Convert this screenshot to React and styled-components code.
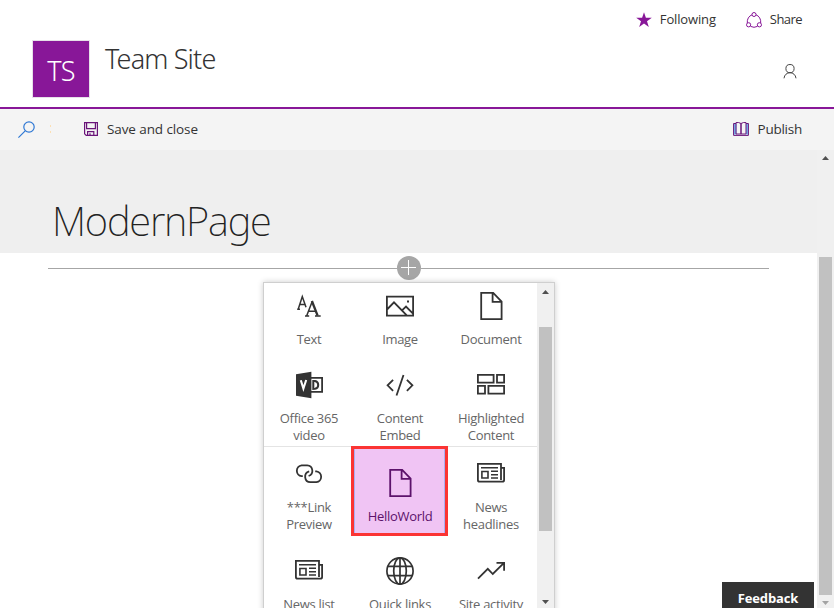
import React from 'react';
import styled, { createGlobalStyle, css } from 'styled-components';

const Global = createGlobalStyle`
  * { box-sizing: border-box; }
  body {
    margin: 0;
    overflow: hidden;
    background: #fff;
    color: #333;
    font-family: 'Open Sans', 'Noto Sans', sans-serif;
  }
  svg { display: block; flex: none; }
`;

const Page = styled.div`
  display: flex;
  flex-direction: column;
  width: 834px;
  height: 608px;
  overflow: hidden;
`;

const SiteHeader = styled.header`
  display: flex;
  justify-content: space-between;
  height: 109px;
  padding-left: 32px;
  border-bottom: 2px solid #881798;
`;

const SiteIdentity = styled.div`
  display: flex;
  gap: 15px;
  padding-top: 40px;
`;

const SiteLogo = styled.div`
  width: 58px;
  height: 58px;
  border: 1px solid #e6e0e8;
  background: #881798;
  color: #fff;
  text-align: center;
  font: 300 27px/60px 'Noto Sans', sans-serif;
  letter-spacing: -0.8px;
`;

const SiteTitle = styled.h1`
  margin: 0;
  font: 300 27px/38px 'Noto Sans', sans-serif;
  letter-spacing: -0.85px;
`;

const HeaderSide = styled.div`
  display: flex;
  flex-direction: column;
  align-items: flex-end;
  gap: 36px;
  padding: 11px 32px 0 0;
`;

const HeaderActions = styled.nav`
  display: flex;
  gap: 30px;
`;

const HeaderAction = styled.div`
  display: flex;
  align-items: center;
  gap: 8px;
  height: 17px;
  font-size: 13px;
  line-height: 17px;
  letter-spacing: ${(p) => p.$tracking}px;
`;

const Account = styled.div`
  padding-right: 5px;
`;

const Toolbar = styled.div`
  display: flex;
  align-items: center;
  height: 41px;
  padding: 0 32px 1px 18px;
  background: #f4f4f4;
`;

const ToolbarHandle = styled.div`
  display: flex;
  flex-direction: column;
  gap: 4px;
  width: 33px;
  margin-left: 15px;
  &::before, &::after {
    content: '';
    width: 1px;
    height: 2px;
    background: #fbdfb4;
  }
`;

const Command = styled.div`
  display: flex;
  align-items: center;
  gap: 8px;
  font-size: 13.5px;
  line-height: 18px;
  letter-spacing: ${(p) => p.$tracking}px;
  ${(p) => p.$end && css`margin-left: auto;`}
`;

const Body = styled.div`
  display: flex;
  flex: 1;
  min-height: 0;
`;

const Canvas = styled.main`
  position: relative;
  flex: 1;
`;

const TitleBand = styled.div`
  height: 103px;
  padding: 41px 0 0 52px;
  background: #efefef;
`;

const PageTitle = styled.h2`
  margin: 0;
  font: 240 40px/60px 'Noto Sans', sans-serif;
  letter-spacing: -1.2px;
  color: #222;
`;

const Divider = styled.div`
  display: flex;
  align-items: center;
  height: 24px;
  margin: 3px 48px 0;
  &::before, &::after {
    content: '';
    flex: 1;
    height: 1px;
    margin-top: 1px;
    background: #a6a6a6;
  }
`;

const Picker = styled.div`
  position: absolute;
  top: 132px;
  left: 263px;
  display: flex;
  width: 292px;
  height: 360px;
  border: 1px solid #cfcfcf;
  background: #fff;
  box-shadow: 0 0 6px rgba(0, 0, 0, 0.2);
`;

const PickerList = styled.div`
  width: 273px;
`;

const PartGroup = styled.div`
  display: grid;
  grid-template-columns: repeat(3, 91px);
  grid-template-rows: ${(p) => p.$rows};
  ${(p) => p.$separated && css`
    border-top: 1px solid #e4e4e4;
    > * { padding-top: 4px; }
  `}
`;

const Part = styled.div`
  color: #333;
  ${(p) => p.$selected && css`
    && {
      z-index: 1;
      width: 97px;
      height: 90px;
      margin: -1px 0 0 -4px;
      padding-top: 11px;
      border: 3px solid #fb3434;
      background: #f0c4f4;
      box-shadow: inset 1px 0 #a9b0f3, inset -1px 0 #a9b0f3;
      color: #5c126b;
    }
  `}
`;

const PartIcon = styled.div`
  display: flex;
  align-items: center;
  height: 46px;
  padding-left: ${(p) => (p.$selected ? 32 : 31)}px;
`;

const PartLabel = styled.div`
  padding: ${(p) => (p.$selected ? '2px 0 0 1px' : '2px 1px 0 0')};
  text-align: center;
  white-space: pre-line;
  font-size: 13px;
  line-height: 17px;
  letter-spacing: -0.3px;
  color: ${(p) => (p.$selected ? '#5c126b' : '#666')};
`;

const ScrollTrack = styled.div`
  display: flex;
  flex-direction: column;
  align-items: center;
  flex: none;
  width: 17px;
  background: #f0f0f0;
  padding: ${(p) => p.$pad};
`;

const ScrollThumb = styled.div`
  width: 13px;
  height: ${(p) => p.$length}px;
  margin: ${(p) => p.$before}px 0 ${(p) => p.$after}px;
  background: #c1c1c1;
`;

const Feedback = styled.div`
  position: absolute;
  right: 3px;
  bottom: 0;
  width: 92px;
  height: 26px;
  background: #333;
  color: #fff;
  text-align: center;
  font-size: 13px;
  font-weight: 700;
  line-height: 32px;
  letter-spacing: -0.15px;
`;

const Arrow = ({ down, color = '#505050' }) => (
  <svg width="7" height="4" viewBox="0 0 7 4" fill={color}>
    <path d={down ? 'M0 0H7L3.5 4Z' : 'M0 4H7L3.5 0Z'} />
  </svg>
);

const Glyph = ({ children, width = 1.8 }) => (
  <svg width="28" height="28" viewBox="0 0 28 28" fill="none" stroke="currentColor" strokeWidth={width}>
    {children}
  </svg>
);

const TextGlyph = () => (
  <Glyph width={1.5}>
    <path d="M3.2 17.3 7.3 4.6 11 15.2M4.9 12.6H10.2M2.2 17.3H5" />
    <path d="M11.8 23.6 17.2 9.4M13.3 19.2H21M10 23.9H14.2M20 23.9H25.7" />
    <path d="M16.9 9 22.6 23.6" strokeWidth="2.3" />
  </Glyph>
);
const ImageGlyph = () => (
  <Glyph>
    <path d="M.9 4.6H27.1V23.6H.9ZM1 17.5 8 10.3 21 23.6M16 18.3 20 14.5 27 21.6" />
    <path d="M21 9.5h2" />
  </Glyph>
);
const DocumentGlyph = () => (
  <Glyph>
    <path d="M4.2 .9H16.2L24.6 9.5V27.1H4.2ZM15.6 1V9.8H24.4" />
  </Glyph>
);
const VideoGlyph = () => (
  <Glyph>
    <path d="M15 6.9H27.1V20.9H15" />
    <path d="M18.3 10V18L20 17.8C24.3 17 24.3 11 20 10.1Z" strokeWidth="2" />
    <path d="M1 3.2 16.4 .8V27.2L1 24.8Z" fill="currentColor" stroke="none" />
    <path d="M5.8 9.2 8.4 17.6 11.2 9" stroke="#fff" strokeWidth="2.1" />
  </Glyph>
);
const EmbedGlyph = () => (
  <Glyph>
    <path d="M7.1 8.8 1.6 14.3 7.1 19.8M20.9 8.8 26.4 14.3 20.9 19.8M17.5 4 10.5 24.5" />
  </Glyph>
);
const HighlightGlyph = () => (
  <Glyph>
    <path d="M.9 3.9H16.6V11.6H.9ZM20 3.9H27.1V11.6H20ZM.9 14.9H8V22.6H.9ZM11.4 14.9H27.1V22.6H11.4Z" />
  </Glyph>
);
const LinkGlyph = () => (
  <Glyph>
    <path d="M7.8 16.2H6.6A5.5 5.5 0 0 1 6.6 5.3H12.2A5.5 5.5 0 0 1 13.6 16" />
    <path d="M20.2 11.3H21.4A5.5 5.5 0 0 1 21.4 22.2H15.4A5.5 5.5 0 0 1 14.2 11.4" />
  </Glyph>
);
const NewsGlyph = () => (
  <Glyph>
    <path d="M24 20V3.9H.9V20Q.9 21.7 2.6 21.7H25.3Q27.1 21.7 27.1 20V7.9H24" />
    <path d="M4.9 11.5H11V18H4.9ZM4 7.7H21M14 11.3H21M14 14.7H21M14 18H21" strokeWidth="1.6" />
  </Glyph>
);
const GlobeGlyph = () => (
  <Glyph width={1.7}>
    <circle cx="14" cy="14" r="13.1" />
    <ellipse cx="14" cy="14" rx="6.3" ry="13.1" />
    <path d="M14 1V27M2 9.3H26M2 18.7H26" />
  </Glyph>
);
const ActivityGlyph = () => (
  <Glyph>
    <path d="M1 21.6 10.8 11.8 15.8 17 27 5.8M19.5 5.8H27.1V13.8" />
  </Glyph>
);

const BASIC_PARTS = [
  ['Text', TextGlyph],
  ['Image', ImageGlyph],
  ['Document', DocumentGlyph],
  ['Office 365\nvideo', VideoGlyph],
  ['Content\nEmbed', EmbedGlyph],
  ['Highlighted\nContent', HighlightGlyph],
];
const MORE_PARTS = [
  ['***Link\nPreview', LinkGlyph],
  ['HelloWorld', DocumentGlyph, true],
  ['News\nheadlines', NewsGlyph],
  ['News list', NewsGlyph],
  ['Quick links', GlobeGlyph],
  ['Site activity', ActivityGlyph],
];

const renderPart = ([label, Icon, selected]) => (
  <Part key={label} $selected={selected}>
    <PartIcon $selected={selected}><Icon /></PartIcon>
    <PartLabel $selected={selected}>{label}</PartLabel>
  </Part>
);

export default function App() {
  return (
    <Page>
      <Global />
      <SiteHeader>
        <SiteIdentity>
          <SiteLogo>TS</SiteLogo>
          <SiteTitle>Team Site</SiteTitle>
        </SiteIdentity>
        <HeaderSide>
          <HeaderActions>
            <HeaderAction $tracking={-0.15}>
              <svg width="16" height="16" viewBox="0 0 16 16" fill="#881798">
                <path d="M8 .2 9.9 5.8H15.8L11 9.3 12.8 15.1 8 11.6 3.2 15.1 5 9.3.2 5.8H6.1Z" />
              </svg>
              Following
            </HeaderAction>
            <HeaderAction $tracking={-0.55}>
              <svg width="16" height="16" viewBox="0 0 16 16" fill="none" stroke="#881798">
                <circle cx="8" cy="2.5" r="2" />
                <circle cx="2.6" cy="12.8" r="2.1" />
                <circle cx="13.4" cy="12.8" r="2.1" />
                <path d="M6 2.8C2.8 4 .9 7.2 1.3 11M10 2.8C13.2 4 15.1 7.2 14.7 11M4.6 14.4Q8 16.2 11.4 14.4" />
              </svg>
              Share
            </HeaderAction>
          </HeaderActions>
          <Account>
            <svg width="14" height="15" viewBox="0 0 14 15" fill="none" stroke="#444">
              <circle cx="7" cy="4.6" r="4.1" />
              <path d="M1 14.3C1.3 10.8 4 8.7 7 8.7S12.7 10.8 13 14.3" />
            </svg>
          </Account>
        </HeaderSide>
      </SiteHeader>

      <Toolbar>
        <svg width="17" height="17" viewBox="0 0 17 17" fill="none" stroke="#2f78d4" strokeWidth="1.2">
          <circle cx="11" cy="6" r="5.2" />
          <path d="M7.2 9.8.4 16.6" />
        </svg>
        <ToolbarHandle />
        <Command $tracking={-0.1}>
          <svg width="16" height="14" viewBox="0 0 16 14" fill="none" stroke="#6a1479" strokeWidth="1.2">
            <path d="M1.6.6H14.4V13.4H3.2L1.6 11.8ZM3.6.6V6.6H12.4V.6M4.6 13.4V9.6H10.8V13.4M7 11.3V13.4" />
          </svg>
          Save and close
        </Command>
        <Command $end $tracking={-0.25}>
          <svg width="17" height="14" viewBox="0 0 17 14" fill="none">
            <path d="M.5 1.5H3.5V12.5H.5ZM13 1.5h2.5v11H13Z" fill="#79b5ef" />
            <path d="M8 1.5Q5.5 0 3 .6V12H8ZM8 1.5Q10.5 0 13 .6V12H8ZM3 1.5H.6V13.4H15.4V1.5H13" stroke="#6a1479" />
          </svg>
          Publish
        </Command>
      </Toolbar>

      <Body>
        <Canvas>
          <TitleBand>
            <PageTitle>ModernPage</PageTitle>
          </TitleBand>
          <Divider>
            <svg width="24" height="24" viewBox="0 0 24 24">
              <circle cx="12" cy="12" r="12" fill="#a6a6a6" />
              <path d="M4 11.5H19M11.5 4V19" stroke="#fff" />
            </svg>
          </Divider>
          <Picker>
            <PickerList>
              <PartGroup $rows="79px 84px">{BASIC_PARTS.map(renderPart)}</PartGroup>
              <PartGroup $rows="97px 97px" $separated>{MORE_PARTS.map(renderPart)}</PartGroup>
            </PickerList>
            <ScrollTrack $pad="7px 0 0">
              <Arrow />
              <ScrollThumb $length={204} $before={33} $after={69} />
              <Arrow down />
            </ScrollTrack>
          </Picker>
          <Feedback>Feedback</Feedback>
        </Canvas>
        <ScrollTrack $pad="6px 0 0">
          <Arrow />
          <ScrollThumb $length={338} $before={97} $after={6} />
          <Arrow down color="#a3a3a3" />
        </ScrollTrack>
      </Body>
    </Page>
  );
}
